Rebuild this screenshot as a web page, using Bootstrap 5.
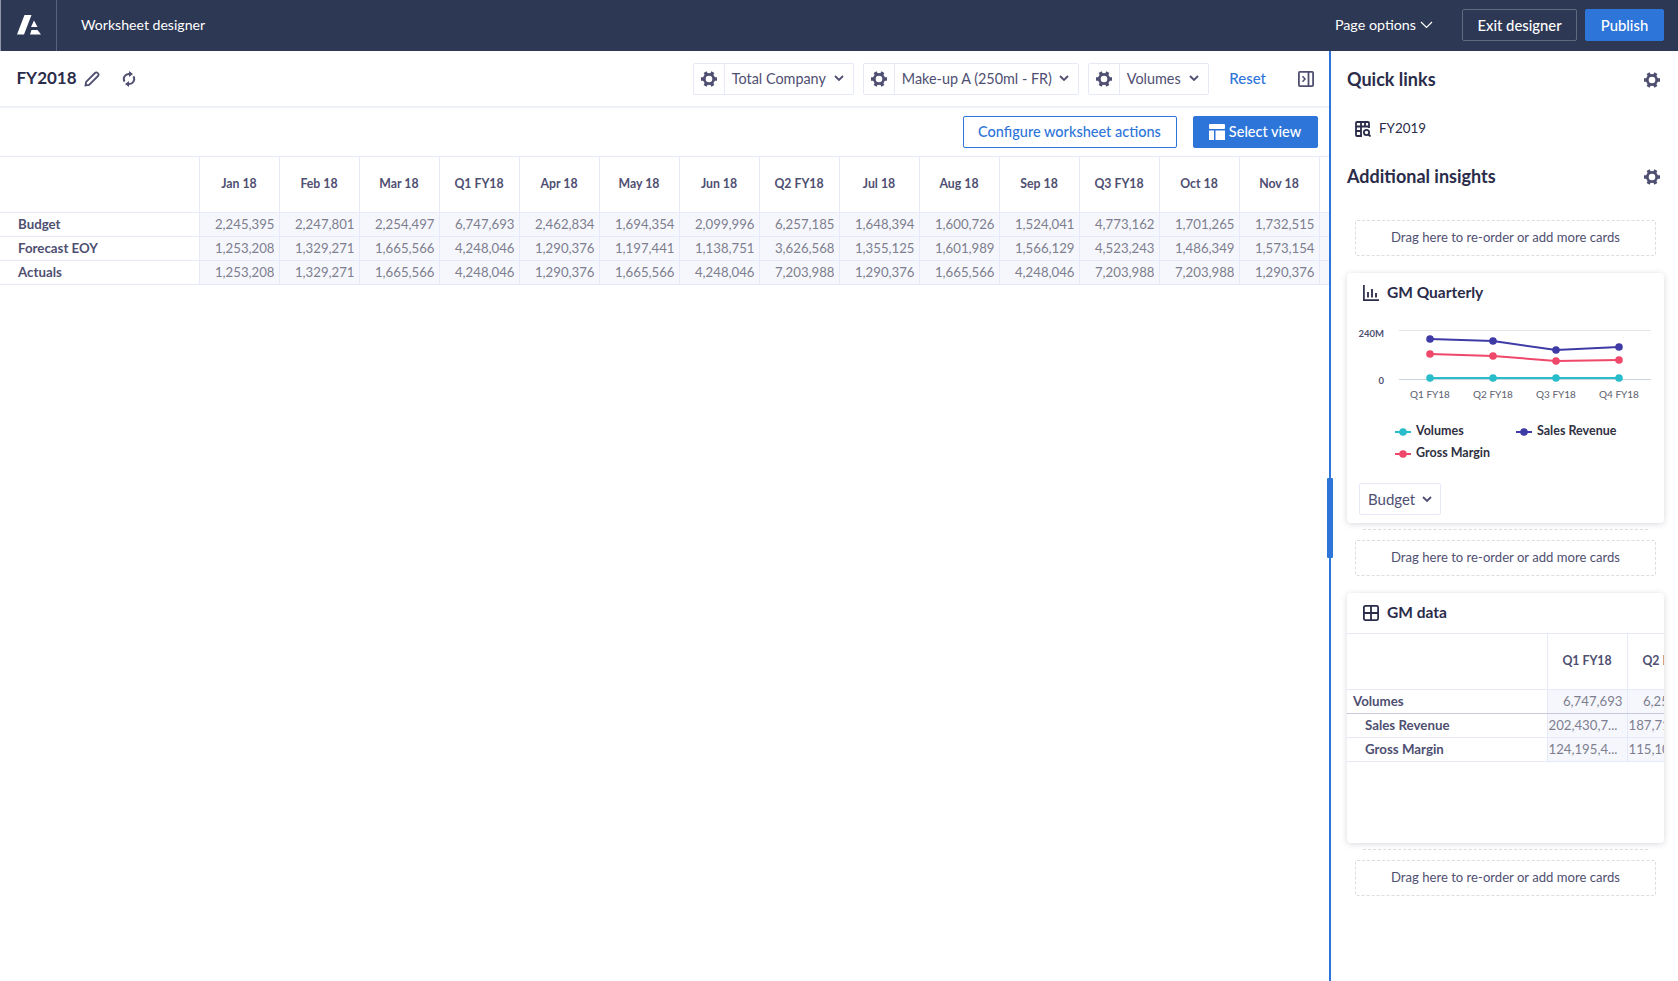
<!DOCTYPE html>
<html lang="en"><head><meta charset="utf-8"><title>Worksheet designer</title>
<link rel="stylesheet" href="https://cdn.jsdelivr.net/npm/bootstrap@5.3.0/dist/css/bootstrap.min.css">
<style>
:root{--navy:#2d3855;--blue:#2e75d9;--ink:#2a2c4a;--slate:#4f4f72;--line:#e6e9f7;}
html,body{height:100%}
body{font-family:Lato,"Liberation Sans",sans-serif;color:var(--ink);font-size:15px;overflow:hidden}
.app-top{height:51px;background:var(--navy);color:#fff;border-left:1px solid #8f96a8;flex-wrap:nowrap;padding:0 0 1px 0}
.logo-cell{width:56px;border-right:1px solid #59637d;align-self:flex-start;height:51px}
.app-title{margin:0 0 1px 24px;font-size:14.100px}
.page-opts{font-size:14.300px;color:#fff;padding:0 0 1px;border:0;background:none;margin-right:29px;white-space:nowrap}
.nav-end{padding-right:14px}
.btn-exit,.btn-pub{height:32px;font-size:14.800px;padding:0;border-radius:2px;font-weight:500;line-height:28px;white-space:nowrap}
.btn-exit{width:115px;color:#fff;border:1px solid #5d6b7d;background:transparent}
.btn-pub{width:79px;margin-left:8px;background:var(--blue);border:1px solid var(--blue);color:#fff}
.work{height:930px;min-height:0}
.left-pane{width:1329px;flex:none}
.tool-row{height:57px;border-bottom:2px solid #eef0f8;padding:0 15px 0 16.5px}
.sheet-name{font-size:17px;font-weight:700;margin:0;color:var(--ink)}
.ic-pencil{margin-left:7px}
.ic-sync{margin-left:22px}
.combo{height:32px;border:1px solid var(--line);border-radius:2px;color:var(--slate);font-size:14.400px;margin-left:9px}
.combo-cog{width:31px;border-right:1px solid var(--line)}
.combo-val{padding:0 9px 0 6.5px;white-space:nowrap}
.combo-w1{width:161px}.combo-w2{width:216px}.combo-w3{width:121px}
.combo-w0{width:82px;margin-left:0;font-size:15px}
.reset-link{color:var(--blue);text-decoration:none;margin-left:20px;font-size:15px;font-weight:500}
.ic-panel{margin-left:32px}
.act-row{height:48px;padding:0 11.5px 0 0;gap:16px}
.btn-cfg,.btn-sel{height:32px;border-radius:2px;font-size:14.500px;padding:0;line-height:30px;font-weight:500}
.btn-cfg{width:214px;border:1px solid var(--blue);color:var(--blue);background:#fff}
.btn-sel{width:125px;background:var(--blue);border:1px solid var(--blue);color:#fff}
.sheet-grid{table-layout:fixed;border-collapse:collapse;font-size:13.2px;margin:0}
.sheet-grid th,.sheet-grid td{border:1px solid var(--line);padding:0;white-space:nowrap;overflow:hidden}
.sheet-grid tr>*:first-child{border-left:0}
.grid-main{width:1329px;border-top:1px solid var(--line)}
.grid-main tr>*:last-child{border-right:0}
.sheet-grid thead th{height:56px;text-align:center;font-weight:700;color:var(--slate);vertical-align:middle;background:#fff;font-size:12.300px;padding-bottom:1px}
.sheet-grid tbody th{height:24px;padding:1px 0 0 18px;font-weight:700;color:var(--slate);background:#fff;font-size:13.300px}
.sheet-grid tbody td{text-align:right;padding:1px 4px 0 0;color:#7d7e8f;background:#f6f7fc}
.side-pane{width:349px;flex:none;border-left:2px solid var(--blue);position:relative;padding:0 14px 0 16px}
.side-handle{position:absolute;left:-4px;top:427px;width:6px;height:80px;background:var(--blue);border-radius:1px}
.side-head{height:56px;padding-top:1px}
.side-head h2{font-size:18px;font-weight:700;margin:0;color:var(--ink)}
.ic-cog{color:var(--slate);margin-right:4px}
.head-second{margin-bottom:16px}
.quick-row{height:41px;padding:2px 0 0 8px;gap:8px;font-size:13.400px}
.drop-box{height:36px;width:301px;margin:0 0 17px 8px;border:1px dashed #dcdde3;font-size:13.100px;color:var(--slate);border-radius:2px}
.panel-card{height:250px;border:0;border-radius:4px;box-shadow:0 1px 6px rgba(40,45,80,.18);overflow:hidden}
.card-head{height:39px;padding-left:16px;gap:8px;flex:none}
.card-head h3{font-size:15.500px;font-weight:700;margin:0;color:var(--ink)}
.drop-rule{height:0;border-top:1px dashed #dcdde3;margin:6px 16px 10px;width:285px}
.legend-grid{display:grid;grid-template-columns:121px auto;row-gap:5px;padding-left:48px;font-size:12.5px;font-weight:700;color:#2f3042}
.lg-item{display:flex;align-items:center;gap:5px;height:17px;line-height:1}
.budget-combo{margin:21px 0 0 12px}
.grid-mini{width:360px;border-top:1px solid var(--line);margin-top:1px}
.grid-mini tbody tr.total-row th,.grid-mini tbody tr.total-row td{border-bottom:1px solid #c8c8dc}
.grid-mini tbody th.lead-cell{padding-left:6px}
.grid-mini tbody td.trim-cell{padding-right:0;padding-left:1px;text-align:left}
</style></head>
<body class="d-flex flex-column">
<svg width="0" height="0" class="d-none">
<symbol id="cog" viewBox="0 0 16 16"><circle cx="8" cy="8" r="4.7" fill="none" stroke="currentColor" stroke-width="2.8"/><g stroke="currentColor" stroke-width="3.4"><path d="M13 8h3M0 8h3M10.4 3.8l1.5-2.6M5.6 3.8L4.1 1.2M10.4 12.2l1.5 2.6M5.6 12.2l-1.5 2.6"/></g></symbol>
<symbol id="chev" viewBox="0 0 10 6"><path d="M1 1l4 4 4-4" fill="none" stroke="currentColor" stroke-width="1.8"/></symbol>
</svg>

<header class="navbar app-top d-flex align-items-center">
  <div class="logo-cell flex-none">
    <svg width="56" height="51" viewBox="0 0 56 51" fill="#fff"><path d="M23.5 15h7L23 34.5h-7zM33 20.5l3.5 6.5H30zM30.5 30h6l3.500 4.500H29z"/></svg>
  </div>
  <span class="app-title">Worksheet designer</span>
  <div class="ms-auto d-flex align-items-center nav-end">
    <button class="page-opts d-flex align-items-center gap-1" type="button">Page options <svg width="13" height="8" viewBox="0 0 13 8"><path d="M1 1l5.500 5.500L12 1" fill="none" stroke="#fff" stroke-width="1.2"/></svg></button>
    <button class="btn btn-exit" type="button">Exit designer</button>
    <button class="btn btn-pub" type="button">Publish</button>
  </div>
</header>

<main class="work d-flex">
  <section class="left-pane">
    <div class="tool-row d-flex align-items-center">
      <h1 class="sheet-name">FY2018</h1>
      <svg class="ic-pencil" width="16" height="16" viewBox="0 0 16 16" fill="none" stroke="#4f4f72" stroke-width="1.8"><path d="M1.500 14.500l.6-3.600L11 2a1.800 1.800 0 0 1 2.600 0l.4.4a1.800 1.800 0 0 1 0 2.600L5.100 13.900z"/></svg>
      <svg class="ic-sync" width="14" height="16" viewBox="0 0 14 16" fill="none" stroke="#4f4f72" stroke-width="2"><path d="M2.600 10.600A5 5 0 0 1 7.500 3M11.400 5.400A5 5 0 0 1 6.500 13"/><path d="M7 0l4 3-4 3zM7 10l-4 3 4 3z" fill="#4f4f72" stroke="none"/></svg>
      <div class="combo combo-w1 d-flex align-items-center ms-auto">
        <span class="combo-cog d-flex align-items-center justify-content-center h-100"><svg width="16" height="16"><use href="#cog"/></svg></span>
        <span class="combo-val flex-grow-1 d-flex align-items-center justify-content-between">Total Company <svg width="10" height="6"><use href="#chev"/></svg></span>
      </div>
      <div class="combo combo-w2 d-flex align-items-center">
        <span class="combo-cog d-flex align-items-center justify-content-center h-100"><svg width="16" height="16"><use href="#cog"/></svg></span>
        <span class="combo-val flex-grow-1 d-flex align-items-center justify-content-between">Make-up A (250ml - FR) <svg width="10" height="6"><use href="#chev"/></svg></span>
      </div>
      <div class="combo combo-w3 d-flex align-items-center">
        <span class="combo-cog d-flex align-items-center justify-content-center h-100"><svg width="16" height="16"><use href="#cog"/></svg></span>
        <span class="combo-val flex-grow-1 d-flex align-items-center justify-content-between">Volumes <svg width="10" height="6"><use href="#chev"/></svg></span>
      </div>
      <a class="reset-link" href="#">Reset</a>
      <svg class="ic-panel" width="16" height="16" viewBox="0 0 16 16" fill="none" stroke="#4f4f72" stroke-width="1.8"><rect x=".9" y=".9" width="14.200" height="14.200" rx="1"/><path d="M10.500 1v14"/><path d="M4.500 5.300L7 8l-2.500 2.700" stroke-width="1.500"/></svg>
    </div>
    <div class="act-row d-flex align-items-center justify-content-end">
      <button class="btn btn-cfg" type="button">Configure worksheet actions</button>
      <button class="btn btn-sel d-flex align-items-center justify-content-center gap-1" type="button"><svg width="16" height="16" viewBox="0 0 16 16" fill="#fff"><rect width="16" height="5" rx="1"/><rect y="6.500" width="5" height="9.500"/><rect x="6.500" y="6.500" width="9.500" height="9.500"/></svg>Select view</button>
    </div>
    <table class="sheet-grid grid-main">
      <colgroup><col style="width:199px"><col span="14" style="width:80px"><col style="width:10px"></colgroup>
      <thead><tr><th></th><th>Jan 18</th><th>Feb 18</th><th>Mar 18</th><th>Q1 FY18</th><th>Apr 18</th><th>May 18</th><th>Jun 18</th><th>Q2 FY18</th><th>Jul 18</th><th>Aug 18</th><th>Sep 18</th><th>Q3 FY18</th><th>Oct 18</th><th>Nov 18</th><th></th></tr></thead>
      <tbody>
      <tr><th>Budget</th><td>2,245,395</td><td>2,247,801</td><td>2,254,497</td><td>6,747,693</td><td>2,462,834</td><td>1,694,354</td><td>2,099,996</td><td>6,257,185</td><td>1,648,394</td><td>1,600,726</td><td>1,524,041</td><td>4,773,162</td><td>1,701,265</td><td>1,732,515</td><td></td></tr>
      <tr><th>Forecast EOY</th><td>1,253,208</td><td>1,329,271</td><td>1,665,566</td><td>4,248,046</td><td>1,290,376</td><td>1,197,441</td><td>1,138,751</td><td>3,626,568</td><td>1,355,125</td><td>1,601,989</td><td>1,566,129</td><td>4,523,243</td><td>1,486,349</td><td>1,573,154</td><td></td></tr>
      <tr><th>Actuals</th><td>1,253,208</td><td>1,329,271</td><td>1,665,566</td><td>4,248,046</td><td>1,290,376</td><td>1,665,566</td><td>4,248,046</td><td>7,203,988</td><td>1,290,376</td><td>1,665,566</td><td>4,248,046</td><td>7,203,988</td><td>7,203,988</td><td>1,290,376</td><td></td></tr>
      </tbody>
    </table>
  </section>

  <aside class="side-pane">
    <div class="side-handle"></div>
    <div class="side-head d-flex align-items-center justify-content-between"><h2>Quick links</h2><svg class="ic-cog" width="16" height="16"><use href="#cog"/></svg></div>
    <div class="quick-row d-flex align-items-center">
      <svg width="16" height="16" viewBox="0 0 16 16" fill="none" stroke="#2a2c4a" stroke-width="1.800"><path d="M7 15H2a1 1 0 0 1-1-1V2a1 1 0 0 1 1-1h11a1 1 0 0 1 1 1v5"/><path d="M1 5.500h13M6 1v14M1 10h5M10 1v5"/><circle cx="11.500" cy="11.500" r="2.600"/><path d="M13.500 13.500l2 2"/></svg>
      <span>FY2019</span>
    </div>
    <div class="side-head head-second d-flex align-items-center justify-content-between"><h2>Additional insights</h2><svg class="ic-cog" width="16" height="16"><use href="#cog"/></svg></div>

    <div class="drop-box d-flex align-items-center justify-content-center">Drag here to re-order or add more cards</div>

    <div class="card panel-card">
      <div class="card-head d-flex align-items-center">
        <svg width="16" height="16" viewBox="0 0 16 16" fill="none" stroke="#2a2c4a" stroke-width="1.700"><path d="M.9 0v15.100H16"/><path d="M5 7v5.500M9 4v8.500M13 8v4.500" stroke-width="1.800"/></svg>
        <h3>GM Quarterly</h3>
      </div>
      <svg width="317" height="111" viewBox="1347 312 317 111" class="d-block flex-none">
        <path d="M1399 330.500h252" stroke="#e3e4ea"/><path d="M1399 379.500h252" stroke="#ccd3e2"/>
        <g font-family="Lato,Liberation Sans,sans-serif" font-size="9.500" font-weight="700" fill="#4f4f72" text-anchor="end"><text x="1384" y="336.500">240M</text><text x="1384" y="384">0</text></g>
        <g font-family="Lato,Liberation Sans,sans-serif" font-size="10" fill="#5c5e6e" text-anchor="middle"><text x="1430" y="397.500">Q1 FY18</text><text x="1493" y="397.500">Q2 FY18</text><text x="1556" y="397.500">Q3 FY18</text><text x="1619" y="397.500">Q4 FY18</text></g>
        <g fill="none" stroke-width="2"><path d="M1430 339L1493 341L1556 350L1619 347" stroke="#3f3ba6"/><path d="M1430 354L1493 356L1556 361L1619 360" stroke="#f0486a"/><path d="M1430 378H1619" stroke="#29bcc9"/></g>
        <g fill="#3f3ba6"><circle cx="1430" cy="339" r="3.800"/><circle cx="1493" cy="341" r="3.800"/><circle cx="1556" cy="350" r="3.800"/><circle cx="1619" cy="347" r="3.800"/></g>
        <g fill="#f0486a"><circle cx="1430" cy="354" r="3.800"/><circle cx="1493" cy="356" r="3.800"/><circle cx="1556" cy="361" r="3.800"/><circle cx="1619" cy="360" r="3.800"/></g>
        <g fill="#29bcc9"><circle cx="1430" cy="378" r="3.800"/><circle cx="1493" cy="378" r="3.800"/><circle cx="1556" cy="378" r="3.800"/><circle cx="1619" cy="378" r="3.800"/></g>
      </svg>
      <div class="legend-grid">
        <span class="lg-item"><svg width="16" height="8"><path d="M0 4h16" stroke="#29bcc9" stroke-width="2"/><circle cx="8" cy="4" r="3.800" fill="#29bcc9"/></svg>Volumes</span>
        <span class="lg-item"><svg width="16" height="8"><path d="M0 4h16" stroke="#3f3ba6" stroke-width="2"/><circle cx="8" cy="4" r="3.800" fill="#3f3ba6"/></svg>Sales Revenue</span>
        <span class="lg-item"><svg width="16" height="8"><path d="M0 4h16" stroke="#f0486a" stroke-width="2"/><circle cx="8" cy="4" r="3.800" fill="#f0486a"/></svg>Gross Margin</span>
      </div>
      <div class="combo combo-w0 budget-combo d-flex align-items-center justify-content-between px-2 flex-none">Budget <svg width="10" height="6"><use href="#chev"/></svg></div>
    </div>
    <div class="drop-rule"></div>
    <div class="drop-box d-flex align-items-center justify-content-center">Drag here to re-order or add more cards</div>

    <div class="card panel-card">
      <div class="card-head d-flex align-items-center">
        <svg width="16" height="16" viewBox="0 0 16 16" fill="none" stroke="#2a2c4a" stroke-width="1.800"><rect x=".9" y=".9" width="14.200" height="14.200" rx="1.500"/><path d="M8 1v14M1 8h14"/></svg>
        <h3>GM data</h3>
      </div>
      <table class="sheet-grid grid-mini">
        <colgroup><col style="width:200px"><col style="width:80px"><col style="width:80px"></colgroup>
        <thead><tr><th></th><th>Q1 FY18</th><th>Q2 FY18</th></tr></thead>
        <tbody>
        <tr class="total-row"><th class="lead-cell">Volumes</th><td>6,747,693</td><td>6,257,185</td></tr>
        <tr><th>Sales Revenue</th><td class="trim-cell">202,430,7...</td><td class="trim-cell">187,715,5...</td></tr>
        <tr><th>Gross Margin</th><td class="trim-cell">124,195,4...</td><td class="trim-cell">115,103,7...</td></tr>
        </tbody>
      </table>
    </div>
    <div class="drop-rule"></div>
    <div class="drop-box d-flex align-items-center justify-content-center">Drag here to re-order or add more cards</div>
  </aside>
</main>
<script src="https://cdn.jsdelivr.net/npm/bootstrap@5.3.0/dist/js/bootstrap.bundle.min.js"></script>
</body></html>
